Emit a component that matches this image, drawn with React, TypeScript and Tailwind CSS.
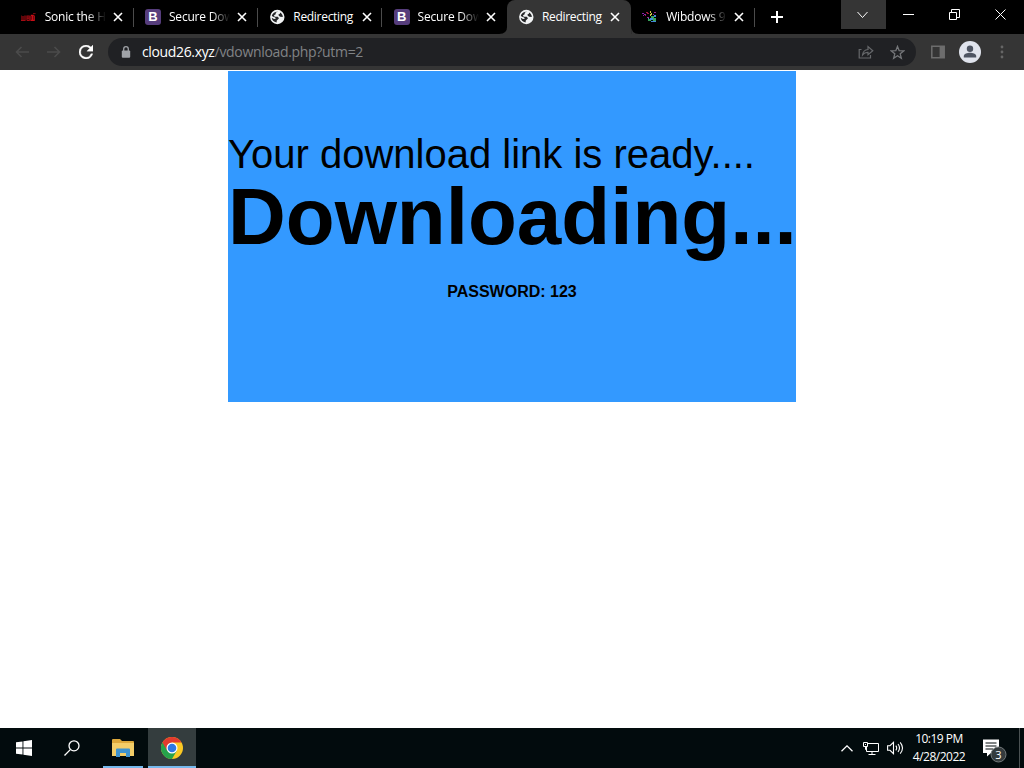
import type { ReactNode } from "react";

type Favicon = "sonic" | "bootstrap" | "globe" | "wibdows";

const tabs: { id: number; title: string; icon: Favicon; active?: boolean }[] = [
  { id: 1, title: "Sonic the H", icon: "sonic" },
  { id: 2, title: "Secure Dow", icon: "bootstrap" },
  { id: 3, title: "Redirecting", icon: "globe" },
  { id: 4, title: "Secure Dow", icon: "bootstrap" },
  { id: 5, title: "Redirecting", icon: "globe", active: true },
  { id: 6, title: "Wibdows 9", icon: "wibdows" },
];

const TabIcon = ({ icon }: { icon: Favicon }) => {
  if (icon === "bootstrap") {
    return (
      <span className="flex h-4 w-4 items-center justify-center rounded-[3px] bg-[#563d7c] font-['Liberation_Sans',sans-serif] text-[13px] leading-4 font-bold text-white">
        B
      </span>
    );
  }
  if (icon === "globe") {
    return (
      <svg viewBox="0 0 16 16" className="h-4 w-4">
        <circle cx="8.3" cy="8" r="7.2" fill="#f1f3f4" />
        <path
          d="M9 2.8 6.8 3.6 6.7 5.2 5 6.3 5.6 7.7 8.8 7.8 10 9.2 8.6 10.8 7.8 11.4 7.6 13.4C4.7 13 2.8 11 2.7 8.8L5 9.9 6.8 9.8 6.1 8.6 3.6 7.4 2.8 6.8C3.4 4.4 5.6 2.5 9 2.8ZM11 3.6C12.8 4.6 13.8 6.2 13.8 8L11.2 7.8 9.8 6.7 9.4 5.4 10.9 4.8Z"
          fill="#252628"
        />
      </svg>
    );
  }
  if (icon === "sonic") {
    return (
      <svg viewBox="0 0 16 16" className="h-4 w-4" fill="none">
        <path d="M0 6.5V11.5H4V6.5M2 7v4M6 11.5V7H8.2V11.5H6M6 9.2H8.2" stroke="#a30b12" strokeWidth="1.2" />
        <path d="M10 7V11.3H13.2V6.6M11.6 6.5V11M9.7 6.3H12.7" stroke="#c90d16" strokeWidth="1.2" />
        <path d="M12 4.6H14.6" stroke="#7c0a10" />
      </svg>
    );
  }
  return (
    <svg viewBox="0 0 16 16" className="h-4 w-4">
      <path d="M0 4h2v1H0zM2 5h2v1H2zM1 6h1v1H1z" fill="#8b1fa8" />
      <path d="M4 3h2v1H4zM5 4h2v1H5zM3 6h1v1H3z" fill="#a51740" />
      <path d="M8 2h1v2H8zM9 4h1v2H9zM8 5h1v2H8z" fill="#c9c945" />
      <path d="M12 3h2v1h-2zM11 5h1v1h-1zM5 8h2v1H5z" fill="#9a2b90" />
      <path d="M9 7h3v2H9zM11 9h3v3h-3zM6 10h3v2H6z" fill="#37a45a" />
      <path d="M12 6h2v2h-2zM8 9h3v2H8zM9 12h5v1H9zM6 9h1v1H6z" fill="#4289d8" />
    </svg>
  );
};

const Close = () => (
  <svg viewBox="0 0 10 10" className="h-2.5 w-2.5 shrink-0" stroke="#fff" strokeWidth="1.6">
    <path d="M1 1 9 9M9 1 1 9" />
  </svg>
);

const TabStrip = () => (
  <div className="flex h-[34px] bg-black pl-[9.4px]">
    {tabs.map((tab) => (
      <div
        key={tab.id}
        className={`relative flex h-[34px] w-[124.3px] shrink-0 items-center ${
          tab.active ? "rounded-t-lg bg-[#353535]" : ""
        }`}
      >
        {tab.active && (
          <svg viewBox="0 0 140 8" className="absolute bottom-0 -left-2 h-2 w-[140.3px]" fill="#353535">
            <path d="M0 8Q8 8 8 0V8ZM132 0Q132 8 140 8H132Z" />
          </svg>
        )}
        <div className="ml-[11.3px] shrink-0">
          <TabIcon icon={tab.icon} />
        </div>
        <div
          className={`ml-2 w-[61px] shrink-0 text-[12px] leading-4 whitespace-nowrap text-white ${
            tab.icon === "globe"
              ? "tracking-[-0.3px]"
              : "tracking-[-0.2px] [mask-image:linear-gradient(to_right,black_42px,transparent_61px)]"
          }`}
        >
          {tab.title}
        </div>
        <div className="ml-[7.3px]">
          <Close />
        </div>
        {!tab.active && tab.id !== 4 && <div className="absolute top-2 right-0 h-[19px] w-px bg-[#4b4b4b]" />}
      </div>
    ))}
    <svg viewBox="0 0 12 12" className="mt-[11px] ml-[15.8px] h-3 w-3" stroke="#fff" strokeWidth="2">
      <path d="M6 0V12M0 6H12" />
    </svg>
    <div className="ml-auto flex h-[29px]">
      <WindowButton className="w-[45px] bg-[#353535] pr-0.5">
        <path d="M.5 3 5.5 8.5 10.5 3" />
      </WindowButton>
      <WindowButton className="w-[46px] pr-px">
        <path d="M0 5.5H11" />
      </WindowButton>
      <WindowButton className="w-[46px] pr-px">
        <path d="M.5 3.5H7.5V10.5H.5ZM2.5 3V.5H10.5V8.5H8" />
      </WindowButton>
      <WindowButton className="w-[46px] pr-px">
        <path d="M.5 .5 10.5 10.5M10.5 .5 .5 10.5" />
      </WindowButton>
    </div>
  </div>
);

const WindowButton = ({ className, children }: { className: string; children: ReactNode }) => (
  <div className={`flex items-center justify-center ${className}`}>
    <svg viewBox="0 0 11 11" className="h-[11px] w-[11px]" fill="none" stroke="#fff" strokeWidth="1">
      {children}
    </svg>
  </div>
);

const Toolbar = () => (
  <div className="flex h-9 items-center bg-[#353535]">
    <svg viewBox="0 0 14 12" className="ml-[15px] h-3 w-3.5" fill="none" stroke="#4b4b4b" strokeWidth="1.6">
      <path d="M14 6H1.5M6.5 1 1.5 6l5 5" />
    </svg>
    <svg viewBox="0 0 14 12" className="ml-[18px] h-3 w-3.5" fill="none" stroke="#4b4b4b" strokeWidth="1.6">
      <path d="M0 6H12.5M7.5 1l5 5-5 5" />
    </svg>
    <svg viewBox="4 4 16 16" className="ml-[18px] h-3.5 w-3.5" fill="#fff" stroke="#fff" strokeWidth=".4">
      <path d="M17.65 6.35A7.96 7.96 0 0 0 12 4a8 8 0 1 0 7.73 10h-2.08A6 6 0 1 1 12 6c1.66 0 3.14.69 4.22 1.78L13 11h7V4z" />
    </svg>
    <div className="ml-[15px] flex h-7 w-[808px] items-center rounded-full bg-[#202124]">
      <svg viewBox="0 0 10 12" className="ml-[13px] h-3 w-2.5">
        <rect x=".8" y="4.4" width="8.4" height="7.4" rx="1" fill="#a0a3a8" />
        <path d="M2.7 5V3a2.3 2.3 0 0 1 4.6 0v2" fill="none" stroke="#a0a3a8" strokeWidth="1.3" />
      </svg>
      <div className="ml-[11px] text-[14px] leading-5 whitespace-nowrap text-[#808386]">
        <span className="tracking-[-0.35px] text-white">cloud26.xyz</span>
        <span className="tracking-[-0.32px]">/vdownload.php?utm=2</span>
      </div>
      <svg viewBox="0 0 16 14" className="mr-4 ml-auto h-3.5 w-4" fill="none" stroke="#66686b" strokeWidth="1.2">
        <path d="M3.5 4.5H1.2V13H12.5V10M4.6 9.8C5 6.5 7 4.7 10 4.5V1.6L14.8 5.8 10 9.8V7.4C7.8 7.3 6 8 4.6 9.8Z" />
      </svg>
      <svg viewBox="0 0 16 16" className="mr-[11px] h-[15px] w-[15px]" fill="none" stroke="#75777a" strokeWidth="1.4">
        <path d="M8 1.5 9.8 6 14.6 6.3 10.9 9.4 12.1 14.1 8 11.5 3.9 14.1 5.1 9.4 1.4 6.3 6.2 6Z" />
      </svg>
    </div>
    <svg viewBox="0 0 14 14" className="ml-[15px] h-3.5 w-3.5">
      <path d="M.8 1.3H13.2V12.7H.8Z" fill="none" stroke="#6d6d6d" strokeWidth="1.5" />
      <path d="M8.6 1H13.5V13H8.6Z" fill="#6d6d6d" />
    </svg>
    <svg viewBox="0 0 22 22" className="ml-3.5 h-[22px] w-[22px]">
      <circle cx="11" cy="11" r="11" fill="#dfe3ec" />
      <circle cx="11" cy="7.7" r="3.2" fill="#4d5462" />
      <path d="M4.8 16.5V15C4.8 12.8 8.5 11.8 11 11.8s6.2 1 6.2 3.2v1.5Z" fill="#4d5462" />
    </svg>
    <svg viewBox="0 0 4 14" className="ml-[19px] h-3.5 w-1" fill="#666">
      <circle cx="2" cy="2" r="1.4" />
      <circle cx="2" cy="7" r="1.4" />
      <circle cx="2" cy="12" r="1.4" />
    </svg>
  </div>
);

const DownloadPage = () => (
  <main className="flex flex-1 items-start justify-center bg-white font-['Liberation_Sans',Arial,sans-serif] text-black">
    <div className="mt-px flex h-[331px] w-[568px] flex-col bg-[#3399ff] pt-[62px]">
      <p className="text-[40px] leading-[42px] whitespace-nowrap">Your download link is ready....</p>
      <h1 className="mt-0.5 text-[80px] leading-[80px] font-bold whitespace-nowrap">Downloading...</h1>
      <p className="mt-[26px] text-center text-[16px] leading-[18px] font-bold">PASSWORD: 123</p>
    </div>
  </main>
);

const Taskbar = () => (
  <footer className="flex h-10 bg-[#020b0d]">
    <div className="flex w-12 items-center justify-center">
      <svg viewBox="0 0 16 16" className="h-4 w-4" fill="#fff">
        <path d="M0 2.3 6.5 1.4V7.5H0ZM7.4 1.2 16 0V7.5H7.4ZM0 8.5H6.5V14.6L0 13.7ZM7.4 8.5H16V16L7.4 14.8Z" />
      </svg>
    </div>
    <div className="flex w-12 items-center justify-center">
      <svg viewBox="0 0 16 16" className="h-4 w-4" fill="none" stroke="#fff" strokeWidth="1.3">
        <circle cx="10" cy="5.8" r="5" />
        <path d="M6.3 9.6.5 15.5" />
      </svg>
    </div>
    <div className="mr-[5px] ml-[7px] flex w-10 flex-col items-center border-b-2 border-[#76b9ed] pt-[11px]">
      <svg viewBox="0 0 22 19" className="h-[19px] w-[22px]">
        <path d="M0 1Q0 0 1 0H8L10 2H21Q22 2 22 3V17H0Z" fill="#dda83b" />
        <path d="M0 4H22V17H0Z" fill="#f3cd68" />
        <path d="M4 10.5Q4 9.5 5 9.5H17Q18 9.5 18 10.5V18H14V14H8V18H4Z" fill="#3f93cf" />
      </svg>
    </div>
    <div className="flex w-12 flex-col items-center border-b-2 border-[#76b9ed] bg-[#343d3e] pt-[9px]">
      <svg viewBox="0 0 24 24" className="h-[22px] w-[22px]">
        <circle cx="12" cy="12" r="12" fill="#fbc924" />
        <path d="M12 12 1.6 6A12 12 0 0 0 12 24L17.2 15Z" fill="#26a34b" />
        <path d="M12 12V6H22.4A12 12 0 0 0 1.6 6L6.8 15Z" fill="#e33b2e" />
        <circle cx="12" cy="12" r="6" fill="#fff" />
        <circle cx="12" cy="12" r="4.7" fill="#2f78e4" />
      </svg>
    </div>
    <div className="ml-auto flex items-center">
      <svg viewBox="0 0 12 7" className="h-[7px] w-3" fill="none" stroke="#fff" strokeWidth="1.3">
        <path d="M.5 6.3 6 .9l5.5 5.4" />
      </svg>
      <svg viewBox="0 0 16 14" className="ml-2.5 h-3.5 w-4" fill="none" stroke="#fff">
        <path d="M5 2.5H15.5V10.5H3.5V6M.5 1.5H4.5V5.5H.5ZM2.5 5.5V8.5H3.5M5.5 13.5H12.5M9 10.5V13.5M2 3.5H3" />
      </svg>
      <svg viewBox="0 0 17 14" className="ml-2 h-3.5 w-[17px]" fill="none" stroke="#fff" strokeWidth="1.1">
        <path d="M.6 4.7H3L6.5 1.3V12.7L3 9.3H.6ZM8.8 4.6Q10.6 7 8.8 9.4M11 3Q14 7 11 11M13.2 1.3Q17.8 7 13.2 12.7" />
      </svg>
      <div className="ml-[7px] flex w-[56px] flex-col items-center text-[12px] leading-[18px] whitespace-nowrap text-white">
        <span className="tracking-[-0.5px]">10:19 PM</span>
        <span className="tracking-[-0.5px]">4/28/2022</span>
      </div>
      <svg viewBox="0 0 24 24" className="mt-1.5 ml-4 h-6 w-6">
        <path d="M0 .5H16V14H8L4 17.5V14H0Z" fill="#fff" />
        <path d="M2.5 4H13.5M2.5 7H13.5M2.5 10H10" stroke="#020b0d" />
        <circle cx="15.5" cy="15.5" r="7.5" fill="#343b3d" stroke="#747a7c" />
        <text x="15.5" y="19.5" textAnchor="middle" fontSize="11" fill="#fff">
          3
        </text>
      </svg>
      <div className="mr-1 ml-3 h-10 w-px bg-[#4a5152]" />
    </div>
  </footer>
);

const App = () => {
  return (
    <div className="flex h-[768px] w-[1024px] flex-col overflow-hidden bg-white font-['Open_Sans',sans-serif]">
      <TabStrip />
      <Toolbar />
      <DownloadPage />
      <Taskbar />
    </div>
  );
};

export default App;
